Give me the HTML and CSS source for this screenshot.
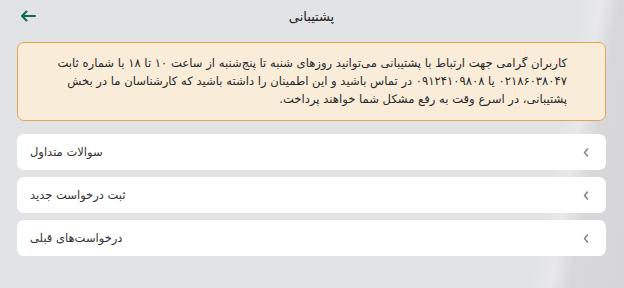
FILE: index.html
```html
<!DOCTYPE html>
<html lang="fa">
<head>
    <meta charset="UTF-8">
    <meta name="viewport" content="width=device-width, initial-scale=1.0">
    <title>پشتیبانی</title>
    <link rel="stylesheet" href="styles.css">
</head>
<body>
    <div class="page">
        <div class="header">
            <button class="back-button" aria-label="بازگشت">
                <svg width="16" height="12" viewBox="0 0 16 12"><path d="M15 6H2M6.5 1.5L2 6l4.5 4.5" fill="none" stroke="#0e6b47" stroke-width="2" stroke-linecap="round" stroke-linejoin="round"/></svg>
            </button>
            <h1>پشتیبانی</h1>
            <span></span>
        </div>
        <div class="notice">
            کاربران گرامی جهت ارتباط با پشتیبانی می‌توانید روزهای شنبه تا پنج‌شنبه از ساعت ۱۰ تا ۱۸ با شماره ثابت ۰۲۱۸۶۰۳۸۰۴۷ یا ۰۹۱۲۴۱۰۹۸۰۸ در تماس باشید و این اطمینان را داشته باشید که کارشناسان ما در بخش پشتیبانی، در اسرع وقت به رفع مشکل شما خواهند پرداخت.
        </div>
        <div class="menu">
            <a class="menu-item" href="#">
                <span>سوالات متداول</span>
                <svg width="6" height="9" viewBox="0 0 6 9"><path d="M4.5 1L1.5 4.5 4.5 8" fill="none" stroke="#808080" stroke-width="1.5" stroke-linecap="round" stroke-linejoin="round"/></svg>
            </a>
            <a class="menu-item" href="#">
                <span>ثبت درخواست جدید</span>
                <svg width="6" height="9" viewBox="0 0 6 9"><path d="M4.5 1L1.5 4.5 4.5 8" fill="none" stroke="#808080" stroke-width="1.5" stroke-linecap="round" stroke-linejoin="round"/></svg>
            </a>
            <a class="menu-item" href="#">
                <span>درخواست‌های قبلی</span>
                <svg width="6" height="9" viewBox="0 0 6 9"><path d="M4.5 1L1.5 4.5 4.5 8" fill="none" stroke="#808080" stroke-width="1.5" stroke-linecap="round" stroke-linejoin="round"/></svg>
            </a>
        </div>
    </div>
</body>
</html>
```

FILE: styles.css
```css
html, body {
    height: 100%;
}
body {
    margin: 0;
    font-family: "DejaVu Sans", "Noto Sans", sans-serif;
    color: #222;
    background: linear-gradient(100deg, #e2e3e5 0%, #e2e3e5 86%, #e9e9eb 89%, #d8d8da 92%, #d6d6d8 100%);
}
.page {
    padding: 0 18px 0 17px;
}
.header {
    display: grid;
    grid-template-columns: 40px 1fr 40px;
    align-items: center;
    height: 32px;
    margin-bottom: 10px;
}
.back-button {
    background: none;
    border: none;
    padding: 0;
    margin-left: 3px;
    width: 16px;
    height: 12px;
    display: flex;
    cursor: pointer;
}
.header h1 {
    margin: 0;
    font-size: 13px;
    font-weight: normal;
    text-align: center;
}
.notice {
    direction: rtl;
    text-align: right;
    background-color: #f9ecd9;
    border: 1.5px solid #e2a656;
    border-radius: 7px;
    padding: 11px 38px 12px 30px;
    font-size: 11.6px;
    line-height: 18px;
    color: #2a2a2a;
}
.menu {
    display: flex;
    flex-direction: column;
    gap: 7px;
    margin-top: 13px;
}
.menu-item {
    display: flex;
    justify-content: space-between;
    align-items: center;
    height: 36px;
    padding: 0 17px 0 13px;
    background-color: #fff;
    border-radius: 7px;
    text-decoration: none;
    color: #333;
    font-size: 11.5px;
}
```
